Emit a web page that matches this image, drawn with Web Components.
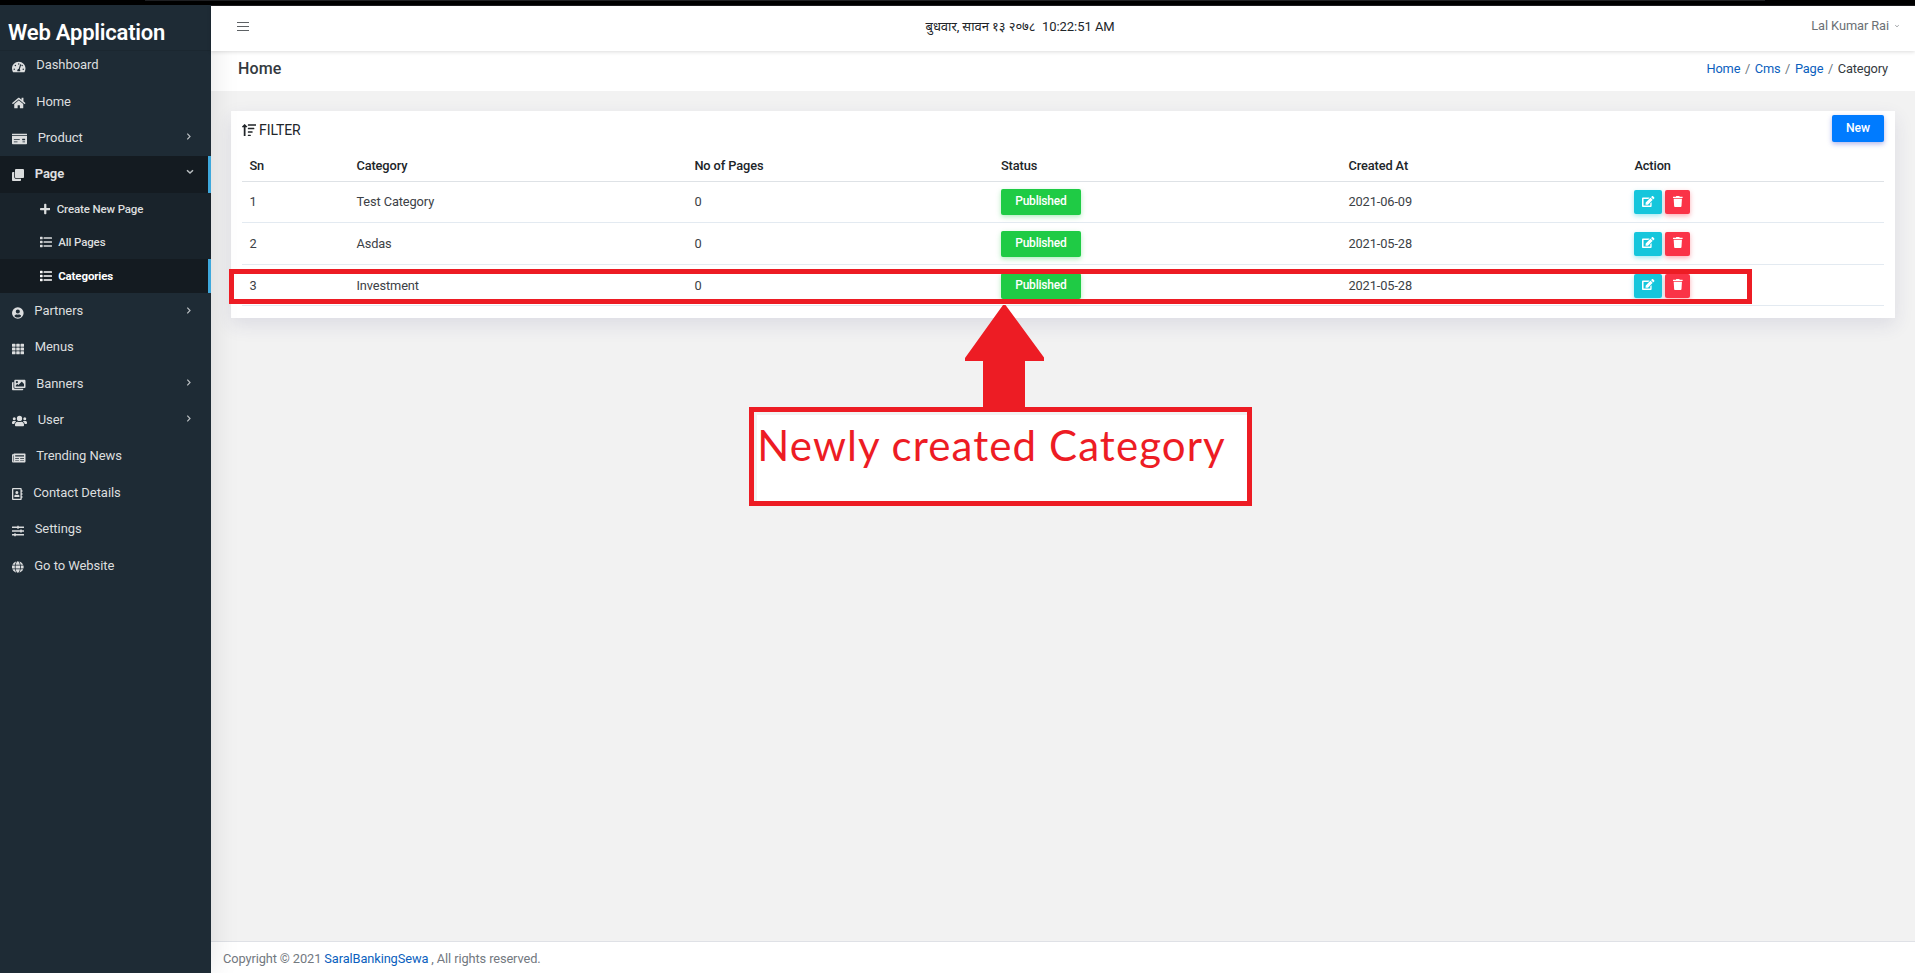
<!DOCTYPE html>
<html lang="en">
<head>
<meta charset="utf-8">
<title>Web Application - Category</title>
<style>
html,body{margin:0;height:100%;overflow:hidden;background:#f2f2f2}
body{font:12.8px/20px Roboto,"Noto Sans",sans-serif;letter-spacing:-.1px;color:#212529}
</style>
</head>
<body>
<web-app></web-app>
<script>
const define=(name,html,setup)=>customElements.define(name,class extends HTMLElement{
  connectedCallback(){
    if(this.shadowRoot)return;
    const t=document.createElement('template');
    t.innerHTML=typeof html==='function'?html(this):html;
    this.attachShadow({mode:'open'}).append(t.content.cloneNode(true));
    if(setup)setup(this);
  }
});

/* width, markup on a 512-high grid */
const ICONS={
 dash:[576,'<path fill-rule="evenodd" d="M288 32C129 32 0 161 0 320c0 53 14 102 39 145 6 9 16 15 27 15h444c11 0 21-6 27-15 25-43 39-92 39-145C576 161 447 32 288 32zm0 64c18 0 32 14 32 32s-14 32-32 32-32-14-32-32 14-32 32-32zM96 384c-18 0-32-14-32-32s14-32 32-32 32 14 32 32-14 32-32 32zm48-160c-18 0-32-14-32-32s14-32 32-32 32 14 32 32-14 32-32 32zm247-56-61 184c13 11 22 28 22 48 0 12-4 23-9 32H233c-6-9-9-20-9-32 0-35 29-64 61-64l61-183c4-13 18-20 30-15 13 4 19 17 15 30zm41 56c-18 0-28-17-29-27l8-24c5-8 12-13 21-13 18 0 32 14 32 32s-14 32-32 32zm48 160c-18 0-32-14-32-32s14-32 32-32 32 14 32 32-14 32-32 32z"/>'],
 home:[576,'<path d="M281 148 96 300v164c0 9 7 16 16 16h112c9 0 16-7 16-16v-96c0-9 7-16 16-16h64c9 0 16 7 16 16v96c0 9 7 16 16 16h112c9 0 16-7 16-16V300L295 148c-4-3-10-3-14 0zm290 103-83-69V44c0-7-5-12-12-12h-56c-7 0-12 5-12 12v72l-90-74c-17-14-43-14-60 0L4 251c-5 4-5 12-1 17l26 31c4 5 12 6 17 2l235-194c4-3 10-3 14 0l235 194c5 4 12 4 17-2l25-31c4-5 4-12-1-17z"/>'],
 product:[640,'<path fill-rule="evenodd" d="M0 448c0 18 14 32 32 32h576c18 0 32-14 32-32V128H0zm448-208h96q16 0 16 16v32q0 16-16 16h-96q-16 0-16-16v-32q0-16 16-16zm0 120h108v34H448zM80 252h250v36H80zm0 108h154v34H80zM624 32H16C7 32 0 39 0 48v48h640V48c0-9-7-16-16-16z"/>'],
 clone:[512,'<path d="M464 0c27 0 48 21 48 48v288c0 27-21 48-48 48H176c-27 0-48-21-48-48V48c0-27 21-48 48-48zM176 416c-44 0-80-36-80-80V128H48c-27 0-48 21-48 48v288c0 27 21 48 48 48h288c27 0 48-21 48-48v-48z"/>'],
 plus:[448,'<path d="M416 208H272V64c0-18-14-32-32-32h-32c-18 0-32 14-32 32v144H32c-18 0-32 14-32 32v32c0 18 14 32 32 32h144v144c0 18 14 32 32 32h32c18 0 32-14 32-32V304h144c18 0 32-14 32-32v-32c0-18-14-32-32-32z"/>'],
 list:[512,'<path d="M16 36h80q16 0 16 16v72q0 16-16 16H16q-16 0-16-16V52q0-16 16-16zm0 168h80q16 0 16 16v72q0 16-16 16H16q-16 0-16-16v-72q0-16 16-16zm0 168h80q16 0 16 16v72q0 16-16 16H16q-16 0-16-16v-72q0-16 16-16zM168 54h328q16 0 16 16v36q0 16-16 16H168q-16 0-16-16V70q0-16 16-16zm0 168h328q16 0 16 16v36q0 16-16 16H168q-16 0-16-16v-36q0-16 16-16zm0 168h328q16 0 16 16v36q0 16-16 16H168q-16 0-16-16v-36q0-16 16-16z"/>'],
 partner:[496,'<path fill-rule="evenodd" d="M248 8a248 248 0 1 0 0 496 248 248 0 0 0 0-496zm0 96a88 88 0 1 1 0 176 88 88 0 0 1 0-176zm0 344c-59 0-111-27-146-69 19-35 56-59 98-59 14 0 22 8 48 8s34-8 48-8c42 0 79 24 98 59-35 42-87 69-146 69z"/>'],
 grid:[512,'<path d="M0 56q0-24 24-24h101q24 0 24 24v80q0 24-24 24H24q-24 0-24-24zm181 0q0-24 24-24h101q24 0 24 24v80q0 24-24 24H205q-24 0-24-24zm182 0q0-24 24-24h101q24 0 24 24v80q0 24-24 24H387q-24 0-24-24zM0 216q0-24 24-24h101q24 0 24 24v80q0 24-24 24H24q-24 0-24-24zm181 0q0-24 24-24h101q24 0 24 24v80q0 24-24 24H205q-24 0-24-24zm182 0q0-24 24-24h101q24 0 24 24v80q0 24-24 24H387q-24 0-24-24zM0 376q0-24 24-24h101q24 0 24 24v80q0 24-24 24H24q-24 0-24-24zm181 0q0-24 24-24h101q24 0 24 24v80q0 24-24 24H205q-24 0-24-24zm182 0q0-24 24-24h101q24 0 24 24v80q0 24-24 24H387q-24 0-24-24z"/>'],
 images:[576,'<path fill-rule="evenodd" d="M480 416v16c0 27-21 48-48 48H48c-27 0-48-21-48-48V176c0-27 21-48 48-48h16v208c0 44 36 80 80 80zm96-80V80c0-27-21-48-48-48H144c-27 0-48 21-48 48v256c0 27 21 48 48 48h384c27 0 48-21 48-48zM256 128a48 48 0 1 1-96 0 48 48 0 0 1 96 0zm-96 144 56-56c4-4 12-4 16 0l40 40 136-136c4-4 12-4 16 0l88 88v112H160z"/>'],
 users:[640,'<path d="M96 224a64 64 0 1 0 0-128 64 64 0 0 0 0 128zm448 0a64 64 0 1 0 0-128 64 64 0 0 0 0 128zm32 32h-64c-18 0-34 7-45 18 40 22 69 62 75 110h66c18 0 32-14 32-32v-32c0-35-29-64-64-64zm-256 0a112 112 0 1 0 0-224 112 112 0 0 0 0 224zm77 32h-8c-42 20-96 20-138 0h-8c-64 0-115 51-115 115v29c0 27 21 48 48 48h288c27 0 48-21 48-48v-29c0-64-51-115-115-115zm-224-14c-11-11-27-18-45-18H64c-35 0-64 29-64 64v32c0 18 14 32 32 32h66c6-48 35-88 75-110z"/>'],
 news:[576,'<path fill-rule="evenodd" d="M552 64H88c-13 0-24 11-24 24v8H24c-13 0-24 11-24 24v272c0 31 25 56 56 56h472c27 0 48-21 48-48V88c0-13-11-24-24-24zM48 400c-4 0-8-4-8-8V144h24v248c0 4-8 8-16 8zm88-264h376v52H136zm0 124h160v28H136zm212 0h164v28H348zM136 348h160v28H136zm212 0h164v28H348z"/>'],
 contact:[448,'<path fill-rule="evenodd" d="M436 160c7 0 12-5 12-12v-40c0-7-5-12-12-12h-20V48c0-27-21-48-48-48H48C22 0 0 21 0 48v416c0 27 22 48 48 48h320c27 0 48-21 48-48v-48h20c7 0 12-5 12-12v-40c0-7-5-12-12-12h-20v-64h20c7 0 12-5 12-12v-40c0-7-5-12-12-12h-20v-64zM56 56h304v400H56zm152 72a64 64 0 1 1 0 128 64 64 0 0 1 0-128zM118 384c-12 0-22-9-22-19v-19c0-32 30-58 67-58 8 0 18 8 45 8s37-8 45-8c37 0 67 26 67 58v19c0 10-10 19-22 19z"/>'],
 sliders:[512,'<path d="M496 384H160v-16c0-9-7-16-16-16h-32c-9 0-16 7-16 16v16H16c-9 0-16 7-16 16v32c0 9 7 16 16 16h80v16c0 9 7 16 16 16h32c9 0 16-7 16-16v-16h336c9 0 16-7 16-16v-32c0-9-7-16-16-16zm0-160h-80v-16c0-9-7-16-16-16h-32c-9 0-16 7-16 16v16H16c-9 0-16 7-16 16v32c0 9 7 16 16 16h336v16c0 9 7 16 16 16h32c9 0 16-7 16-16v-16h80c9 0 16-7 16-16v-32c0-9-7-16-16-16zm0-160H288V48c0-9-7-16-16-16h-32c-9 0-16 7-16 16v16H16C7 64 0 71 0 80v32c0 9 7 16 16 16h208v16c0 9 7 16 16 16h32c9 0 16-7 16-16v-16h208c9 0 16-7 16-16V80c0-9-7-16-16-16z"/>'],
 globe:[496,'<path d="M336 160C322 71 288 8 248 8s-74 63-88 152zm-184 96c0 22 1 44 3 64h186a640 640 0 0 0 0-128H155c-2 20-3 42-3 64zm325-96C448 90 389 37 315 16c26 35 43 88 52 144zM181 16C107 37 48 90 19 160h110c9-56 26-109 52-144zm307 176H373a680 680 0 0 1 0 128h115a248 248 0 0 0 0-128zM120 256c0-22 1-43 3-64H8a248 248 0 0 0 0 128h115c-2-21-3-42-3-64zm40 96c14 89 48 152 88 152s74-63 88-152zm155 144c74-21 133-74 162-144H367c-9 56-26 109-52 144zM19 352c29 70 88 123 162 144-26-35-43-88-52-144z"/>'],
 edit:[576,'<path d="m403 84 89 89c4 4 4 10 0 14L276 403l-92 10c-12 1-23-9-21-21l10-92L389 84c4-4 10-4 14 0zm162-23-48-48c-15-15-39-15-54 0l-35 35c-4 4-4 10 0 14l89 89c4 4 10 4 14 0l35-35c14-15 14-39-1-55zM384 346v94H72V136h222c3 0 6-1 8-4l44-48c8-7 3-20-8-20H48C22 64 0 86 0 112v352c0 27 22 48 48 48h352c27 0 48-21 48-48V306c0-11-13-16-20-8l-40 40c-3 2-4 5-4 8z"/>'],
 trash:[448,'<path d="M432 32H312l-9-19A24 24 0 0 0 281 0H167c-9 0-18 5-22 13l-9 19H16C7 32 0 39 0 48v32c0 9 7 16 16 16h416c9 0 16-7 16-16V48c0-9-7-16-16-16zM32 128h384l-21 339c-2 25-23 45-48 45H101c-25 0-46-20-48-45z"/>'],
 sort:[576,'<path d="M96 6c6-5 18-5 24 0l92 98c7 8 2 28-8 28h-60v364q0 16-16 16H88q-16 0-16-16V132H12c-10 0-15-20-8-28zM256 8h304q16 0 16 16v34q0 16-16 16H256q-16 0-16-16V24q0-16 16-16zm0 142h232q16 0 16 16v34q0 16-16 16H256q-16 0-16-16v-34q0-16 16-16zm0 144h162q16 0 16 16v34q0 16-16 16H256q-16 0-16-16v-34q0-16 16-16zm0 144h88q16 0 16 16v34q0 16-16 16h-88q-16 0-16-16v-34q0-16 16-16z"/>']
};
define('fa-icon',el=>{
  const [w,p]=ICONS[el.getAttribute('name')],s=+(el.getAttribute('size')||12);
  return `<style>:host{display:inline-flex;flex:none}svg{display:block;fill:currentColor}</style>
  <svg width="${w/512*s}" height="${s}" viewBox="0 0 ${w} 512">${p}</svg>`;
});

define('nav-item',el=>{
  const sub=el.hasAttribute('sub'),act=el.hasAttribute('active'),ar=el.getAttribute('arrow');
  const arrow=ar==='down'?'<path d="M1 1.2 4 4 7 1.2" stroke-width="1.5"/>':'<path d="M2.3 0.7 5 3.5 2.3 6.3" stroke-width="1.2"/>';
  return `<style>
  :host{display:flex;align-items:center;box-sizing:border-box;height:${el.getAttribute('h')||36.4}px;
    padding:0 ${act?14.5:18.5}px ${el.getAttribute('pb')||0}px ${sub?39.6:12.4}px;color:${act&&sub?'#fff':'#dcdedf'};font-size:${sub?11.5:13}px;
    font-weight:${act?700:sub?500:400};letter-spacing:${sub?-.13:-.06}px;
    ${act?'background:#141b21;border-right:3px solid #3ea8dc;':''}}
  fa-icon{margin-right:${sub?6.6:10.3}px;position:relative;top:${sub?0:1.5}px}
  span{flex:1;white-space:nowrap}
  .a{fill:none;stroke:#b9bec1;display:block;position:relative;top:-1px}
  </style><fa-icon name="${el.getAttribute('icon')}"></fa-icon><span><slot></slot></span>
  ${ar?`<svg class="a" width="8" height="7" viewBox="0 0 8 7">${arrow}</svg>`:''}`;
});

define('app-sidebar',`<style>
:host{display:flex;flex-direction:column;width:211px;flex:none;background:#1e2b35;box-shadow:0 0 28px rgba(0,0,0,.11);position:relative;z-index:1}
.brand{height:46px;flex:none;box-sizing:border-box;border-bottom:1px solid #1b2730;padding:8px 0 0 8px;font-size:22px;line-height:40px;font-weight:600;color:#fff;letter-spacing:-.22px;white-space:nowrap}
nav{margin-top:-4.2px}
.sub{background:#19232b}
</style>
<div class="brand">Web Application</div>
<nav>
<nav-item icon="dash" h="37">Dashboard</nav-item>
<nav-item icon="home" h="36">Home</nav-item>
<nav-item icon="product" h="36.2" arrow="right">Product</nav-item>
<nav-item icon="clone" h="37" pb="1.2" arrow="down" active>Page</nav-item>
<div class="sub">
<nav-item sub icon="plus" h="33" pb="1.5">Create New Page</nav-item>
<nav-item sub icon="list" h="33" pb="1.5">All Pages</nav-item>
<nav-item sub icon="list" h="34" active>Categories</nav-item>
</div>
<nav-item icon="partner" h="36" arrow="right">Partners</nav-item>
<nav-item icon="grid">Menus</nav-item>
<nav-item icon="images" arrow="right">Banners</nav-item>
<nav-item icon="users" arrow="right">User</nav-item>
<nav-item icon="news">Trending News</nav-item>
<nav-item icon="contact">Contact Details</nav-item>
<nav-item icon="sliders">Settings</nav-item>
<nav-item icon="globe">Go to Website</nav-item>
</nav>`);

define('top-bar',`<style>
:host{display:grid;grid-template-columns:688.5px auto 1fr;align-items:center;box-sizing:border-box;height:46px;flex:none;background:#fff;border-top:1px solid #1c1c1f;padding:0 16px 0 26px;box-shadow:0 1px 4px rgba(0,0,0,.14);position:relative;z-index:2}
svg{display:block;fill:none}
.date{white-space:nowrap;padding-bottom:3px;font-size:13px;letter-spacing:-.04px}
.user{justify-self:end;display:flex;align-items:center;gap:6px;color:#6b7075;padding-bottom:5px;letter-spacing:-.08px}
.m{margin-bottom:4px}
</style>
<svg class="m" width="12" height="9" viewBox="0 0 12 9" stroke="#5d6164"><path d="M0 .5h12M0 4.5h12M0 8.5h12"/></svg>
<div class="date">बुधवार, सावन १३ २०७८&nbsp; 10:22:51 AM</div>
<div class="user">Lal Kumar Rai<svg width="4" height="4" viewBox="0 0 4 4" stroke="#8a8e92" stroke-width=".8"><path d="M.2 1.2 2 2.8 3.8 1.2"/></svg></div>`);

define('page-head',`<style>
:host{display:flex;justify-content:space-between;align-items:center;box-sizing:border-box;height:40px;flex:none;background:#fff;padding:0 27px 5px 27px}
h1{margin:0;font-size:16px;font-weight:500;line-height:20px;color:#343a40;letter-spacing:.1px}
nav{display:flex;gap:4.6px;color:#6c757d;letter-spacing:-.12px}
a{color:#0b5fbe}b{font-weight:400;color:#343a40}
</style><h1>Home</h1><nav><a>Home</a><span>/</span><a>Cms</a><span>/</span><a>Page</a><span>/</span><b>Category</b></nav>`);

define('ui-button',el=>`<style>
:host{display:inline-flex;align-items:center;justify-content:center;box-sizing:border-box;border-radius:2px;color:#fff;font-weight:500;font-size:12px;line-height:20px;padding-bottom:2px}
:host([kind=new]){width:52px;height:27px;background:#007bff;box-shadow:0 2px 5px rgba(60,70,200,.4);font-size:12.2px}
:host([kind=ok]){width:80px;height:26px;background:#1fcb45;box-shadow:0 2px 5px rgba(31,203,69,.35);letter-spacing:-.2px}
:host([kind=edit]){width:28px;height:24px;background:#15c6dc;box-shadow:0 2px 5px rgba(21,198,220,.4)}
:host([kind=del]){width:25px;height:24px;background:#fa3347;box-shadow:0 2px 5px rgba(250,51,71,.4)}
</style><slot></slot>`);

define('data-row',el=>`<style>
:host{display:grid;grid-template-columns:107px 338px 306.5px 347.5px 286px 1fr;align-items:center;box-sizing:border-box;height:${el.getAttribute('h')}px;padding-top:${el.getAttribute('pt')||0}px;border-bottom:1px solid ${el.hasAttribute('head')?'#dee2e6':'#e3eaf1'};${el.hasAttribute('head')?'font-weight:500;':'color:#3c4146'}}
::slotted(*){margin-left:7.4px;white-space:nowrap}
</style><slot></slot>`);

define('category-card',el=>{
  const rows=[['1','Test Category','2021-06-09',41,0],['2','Asdas','2021-05-28',42,0],['3','Investment','2021-05-28',41,1]];
  return `<style>
:host{display:block;box-sizing:border-box;height:207px;margin:20px 20px 0;padding:4px 11px 0;background:#fff;box-shadow:0 7px 18px rgba(50,50,105,.11)}
header{display:flex;justify-content:space-between;height:27px}
.f{display:flex;align-items:center;gap:3px;font-size:14px;color:#212529;padding-top:1px;height:28px}
.act{display:flex;gap:3px}
</style>
<header><div class="f"><fa-icon name="sort" size="12.5"></fa-icon>FILTER</div><ui-button kind="new">New</ui-button></header>
<data-row head h="40" pt="9"><span>Sn</span><span>Category</span><span>No of Pages</span><span>Status</span><span>Created At</span><span>Action</span></data-row>
${rows.map(r=>`<data-row h="${r[3]}" pt="${r[4]}"><span>${r[0]}</span><span>${r[1]}</span><span>0</span><ui-button kind="ok">Published</ui-button><span>${r[2]}</span><div class="act"><ui-button kind="edit"><fa-icon name="edit" size="11"></fa-icon></ui-button><ui-button kind="del"><fa-icon name="trash" size="11"></fa-icon></ui-button></div></data-row>`).join('')}`;
});

define('app-footer',`<style>
:host{display:block;margin-top:auto;box-sizing:border-box;height:32px;flex:none;background:#fff;border-top:1px solid #dfe1e6;padding:7px 12px 0;color:#73797f;line-height:20px}
a{color:#0b5fbe}
</style>Copyright © 2021 <a>SaralBankingSewa</a> , All rights reserved.`);

/* callout drawn over the page: row frame, arrow and note */
define('row-callout',`<style>
:host{position:absolute;left:229px;top:269px;z-index:5;display:block;width:1523px}
.frame{box-sizing:border-box;height:35px;border:5px solid #ed1c24}
.arrow{display:block;margin:1px 0 0 736px;fill:#ed1c24}
.note{margin-left:520px;box-sizing:border-box;width:503px;height:99px;border:5px solid #ed1c24;padding:3px 0 0 3px;background:#f2f2f2}
.in{height:86px;width:490px;background:#fff;color:#ed1c24;font:42px/52px Lato,sans-serif;padding-top:4px;box-sizing:border-box;white-space:nowrap;letter-spacing:1.1px}
.in span{margin-left:.3px}
</style>
<div class="frame"></div>
<svg class="arrow" width="80" height="102" viewBox="0 0 80 102"><path d="M38 0h2.5L79 52.5V56H60v46H18V56H0v-3z"/></svg>
<div class="note"><div class="in"><span>Newly created Category</span></div></div>`);

define('web-app',`<style>
:host{display:flex;flex-direction:column;height:100vh;position:relative;overflow:hidden}
.strip{height:5px;flex:none;background:#000}
.strip i{display:block;height:1px;margin:0 150px 0 145px;background:#202124}
.body{display:flex;flex:1;min-height:0}
main{display:flex;flex-direction:column;flex:1;min-width:0}
</style>
<div class="strip"><i></i></div>
<div class="body"><app-sidebar></app-sidebar>
<main><top-bar></top-bar><page-head></page-head><category-card></category-card><app-footer></app-footer></main></div>
<row-callout></row-callout>`);
</script>
</body>
</html>
